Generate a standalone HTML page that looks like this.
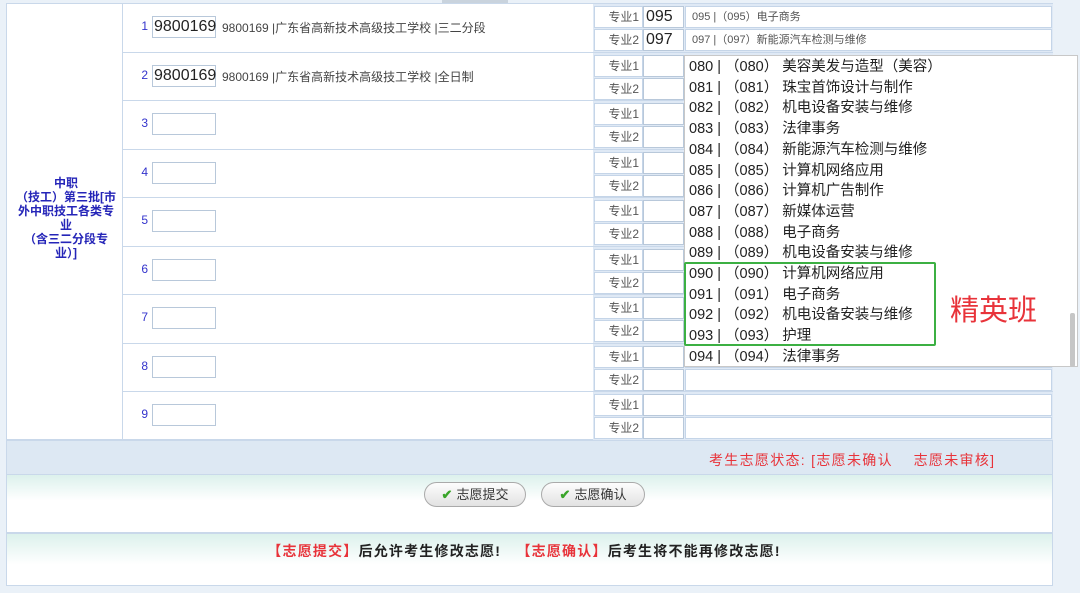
<!DOCTYPE html>
<html><head><meta charset="utf-8">
<style>
*{margin:0;padding:0;box-sizing:border-box}
body{width:1080px;height:593px;background:#eaf1f8;position:relative;overflow:hidden;font-family:"Liberation Sans","Noto Sans CJK SC",sans-serif;font-size:12px;color:#333}
.a{position:absolute}
.ln{position:absolute;background:#c9d8ea}
.lab{position:absolute;left:594px;width:49px;height:22px;background:#fff;border:1px solid #c5d5e8;font-size:12px;color:#555;text-align:right;padding-right:3px;line-height:20px}
.inp{position:absolute;left:643px;width:41px;height:22px;background:#fff;border:1px solid #b8c8da;font-size:16px;color:#222;line-height:20px;padding-left:2px}
.txt{position:absolute;left:685px;width:367px;height:22px;background:#fff;border:1px solid #c5d5e8;font-size:11px;color:#555;line-height:20px;padding-left:6px}
.num{position:absolute;left:138px;width:10px;color:#3333cc;font-size:12px;text-align:right}
.box{position:absolute;left:152px;width:64px;height:22px;border:1px solid #b8c8da;background:#fff;font-size:16px;line-height:20px;padding-left:1px;color:#222}
.sch{position:absolute;left:222px;font-size:12px;color:#444}
.dd{position:absolute;left:684px;top:55px;width:394px;height:312px;background:#fff;border:1px solid #c8c8c8}
.it{position:absolute;left:4px;font-size:14.5px;color:#222;white-space:pre;line-height:20px}
.btn{position:absolute;top:482px;height:25px;border:1px solid #aaa;border-radius:13px;background:linear-gradient(#fdfdfd,#e2e2e2);font-size:13px;color:#333;line-height:23px;text-align:center}
.btn b{color:#3aa52a;font-weight:bold;margin-right:4px}
</style></head><body>
<div class="a" style="left:6px;top:3px;width:1047px;height:437px;background:#fff;border:1px solid #c9d8ea"></div>
<div class="a" style="left:593px;top:3px;width:460px;height:437px;background:#dfe9f5"></div>
<div class="ln" style="left:122px;top:3px;width:1px;height:437px"></div>
<div class="ln" style="left:6px;top:3px;width:1047px;height:1px"></div>
<div class="a" style="left:442px;top:0;width:66px;height:3px;background:#c9d3dd"></div>

<div class="a" style="left:14px;top:176px;width:104px;text-align:center;color:#2525b8;font-weight:bold;font-size:12px;line-height:14px">中职<br>（技工）第三批[市外中职技工各类专业<br>（含三二分段专业）]</div>

<div id="rows"></div>
<script>
var h='';
for(var i=0;i<9;i++){
 var t=3+i*48.55;
 if(i>0)h+='<div class="ln" style="left:122px;top:'+t+'px;width:931px;height:1px"></div>';
 var c=t+24;
 h+='<div class="num" style="top:'+(c-8)+'px">'+(i+1)+'</div>';
 var v=(i<2)?'9800169':'';
 h+='<div class="box" style="top:'+(c-11)+'px">'+v+'</div>';
 if(i==0)h+='<div class="sch" style="top:'+(c-8)+'px">9800169 |广东省高新技术高级技工学校 |三二分段</div>';
 if(i==1)h+='<div class="sch" style="top:'+(c-8)+'px">9800169 |广东省高新技术高级技工学校 |全日制</div>';
 for(var k=0;k<2;k++){
  var y=t+3+k*23;
  h+='<div class="lab" style="top:'+y+'px">专业'+(k+1)+'</div>';
  var iv='',tv='';
  if(i==0&&k==0){iv='095';tv='095 |（095）电子商务';}
  if(i==0&&k==1){iv='097';tv='097 |（097）新能源汽车检测与维修';}
  h+='<div class="inp" style="top:'+y+'px">'+iv+'</div>';
  h+='<div class="txt" style="top:'+y+'px">'+tv+'</div>';
 }
}
document.getElementById('rows').innerHTML=h;
</script>

<div class="a" style="left:6px;top:440px;width:1047px;height:35px;background:#dde8f3;border:1px solid #c9d8ea"></div>
<div class="a" style="left:709px;top:450px;color:#e8333a;font-size:14px;letter-spacing:1.3px;white-space:nowrap">考生志愿状态: [志愿未确认&nbsp;&nbsp;&nbsp;&nbsp;志愿未审核]</div>
<div class="a" style="left:6px;top:475px;width:1047px;height:58px;background:linear-gradient(#dcf1ec,#fff 45%,#fff);border:1px solid #c9d8ea;border-top:none"></div>
<div class="btn" style="left:424px;width:102px"><b>✔</b>志愿提交</div>
<div class="btn" style="left:541px;width:104px"><b>✔</b>志愿确认</div>
<div class="a" style="left:6px;top:533px;width:1047px;height:53px;background:linear-gradient(#dcf1ec,#fff 60%,#fff);border:1px solid #c9d8ea"></div>
<div class="a" style="left:0;top:541px;width:1048px;text-align:center;font-size:14px;letter-spacing:1.2px;font-weight:bold;color:#222"><span style="color:#e8333a">【志愿提交】</span>后允许考生修改志愿!&nbsp;&nbsp;&nbsp;<span style="color:#e8333a">【志愿确认】</span>后考生将不能再修改志愿!</div>

<div class="dd">
<div id="items"></div>
<div class="a" style="left:385px;top:257px;width:5px;height:54px;background:#c6c6c6;border-radius:2px"></div>
</div>
<script>
var L=['美容美发与造型（美容）','珠宝首饰设计与制作','机电设备安装与维修','法律事务','新能源汽车检测与维修','计算机网络应用','计算机广告制作','新媒体运营','电子商务','机电设备安装与维修','计算机网络应用','电子商务','机电设备安装与维修','护理','法律事务'];
var s='';
for(var i=0;i<15;i++){var n=('0'+(80+i)).slice(-3);s+='<div class="it" style="top:'+(1+i*20.7)+'px">'+n+' | （'+n+'） '+L[i]+'</div>';}
document.getElementById('items').innerHTML=s;
</script>
<div class="a" style="left:684px;top:262px;width:252px;height:84px;border:2px solid #3cb043;border-radius:2px"></div>
<div class="a" style="left:950px;top:290px;font-size:29px;color:#e8333a;font-family:'Noto Sans CJK SC',sans-serif;line-height:36px">精英班</div>
</body></html>
